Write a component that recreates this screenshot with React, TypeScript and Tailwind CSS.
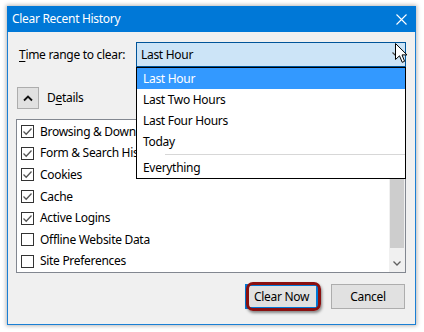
import React from "react";

const font = { fontFamily: '"Noto Sans", "Open Sans", sans-serif', letterSpacing: "-0.3px" };

function Check({ checked }: { checked: boolean }) {
  return (
    <span className="w-[13px] h-[13px] border border-[#333333] bg-white flex items-center justify-center shrink-0">
      {checked && (
        <svg width="11" height="11" viewBox="0 0 11 11">
          <path d="M1.5 5.5 L4.2 8.2 L9.5 2.5" fill="none" stroke="#555555" strokeWidth="1.3" />
        </svg>
      )}
    </span>
  );
}

const items: [string, boolean][] = [
  ["Browsing & Download History", true],
  ["Form & Search History", true],
  ["Cookies", true],
  ["Cache", true],
  ["Active Logins", true],
  ["Offline Website Data", false],
  ["Site Preferences", false],
];

export default function App() {
  return (
    <div className="w-[424px] h-[332px] bg-white pl-[7px] pt-[6px] text-[12px] text-black" style={font}>
      <div className="w-[409px] h-[319px] flex flex-col shadow-[0_0_4px_1px_rgba(0,0,0,0.28)]">
        <div className="h-[26px] bg-[#0078d7] flex items-center justify-between pl-[5px] pr-[9px] text-white text-[12px]">
          <span>Clear Recent History</span>
          <svg width="11" height="11" viewBox="0 0 11 11">
            <path d="M0.5 0.5 L10.5 10.5 M10.5 0.5 L0.5 10.5" stroke="white" strokeWidth="1.1" />
          </svg>
        </div>
        <div className="flex-1 bg-[#f0f0f0] border-x border-b border-[#1a7fd4] pl-[8px] pr-[9px] pt-[10px] relative">
          {/* time range row */}
          <div className="flex items-center h-[25px]">
            <div className="w-[120px] pl-[3px]">
              <span className="underline underline-offset-2">T</span>ime range to clear:
            </div>
            <div className="flex-1 h-[25px] bg-[#cce4f7] border border-[#005499] flex items-center justify-between pl-[4px] pr-[4px] relative">
              <span>Last Hour</span>
              <svg width="9" height="6" viewBox="0 0 9 6">
                <path d="M0.5 0.5 L4.5 4.5 L8.5 0.5" fill="none" stroke="#404040" strokeWidth="1.2" />
              </svg>
            </div>
          </div>

          {/* details row */}
          <div className="flex items-center mt-[20px] ml-[1px] gap-[8px]">
            <div className="w-[22px] h-[22px] bg-[#e1e1e1] border border-[#adadad] flex items-center justify-center">
              <svg width="10" height="7" viewBox="0 0 10 7">
                <path d="M1 5.5 L5 1.5 L9 5.5" fill="none" stroke="#111111" strokeWidth="1.8" />
              </svg>
            </div>
            <span>
              D<span className="underline underline-offset-2">e</span>tails
            </span>
          </div>

          {/* list */}
          <div className="mt-[10px] h-[154px] w-[390px] bg-white border border-[#828790] flex">
            <div className="flex-1 flex flex-col pt-[1px]">
              {items.map(([label, c]) => (
                <div key={label} className="h-[22px] flex items-center pl-[4px] gap-[6px] whitespace-nowrap">
                  <Check checked={c} />
                  <span>{label}</span>
                </div>
              ))}
            </div>
            <div className="w-[16px] bg-[#f0f0f0] flex flex-col">
              <div className="h-[17px]" />
              <div className="h-[111px] mx-[1px] bg-[#cdcdcd]" />
              <div className="flex-1" />
              <div className="h-[17px] flex items-center justify-center">
                <svg width="8" height="5" viewBox="0 0 8 5">
                  <path d="M0.5 0.5 L4 4 L7.5 0.5" fill="none" stroke="#606060" strokeWidth="1.3" />
                </svg>
              </div>
            </div>
          </div>

          {/* buttons */}
          <div className="flex justify-end gap-[13px] mt-[11px] pr-[1px]">
            <div className="relative">
              <div className="w-[73px] h-[25px] bg-[#e1e1e1] border-2 border-[#0078d7] flex items-center justify-center">
                Clear Now
              </div>
              <div className="absolute left-[1px] top-[-2px] right-[-3px] bottom-[-2px] border-[3px] border-[#8a1010] rounded-[7px] shadow-[1px_2px_3px_rgba(0,0,0,0.45)]" />
            </div>
            <div className="w-[74px] h-[25px] bg-[#e1e1e1] border border-[#adadad] flex items-center justify-center">
              Cancel
            </div>
          </div>

          {/* dropdown popup */}
          <div className="absolute left-[128px] top-[35px] w-[270px] h-[112px] bg-white border border-black flex flex-col">
            <div className="h-[21px] bg-[#3399ff] text-white flex items-center pl-[6px]">Last Hour</div>
            <div className="h-[21px] flex items-center pl-[6px]">Last Two Hours</div>
            <div className="h-[21px] flex items-center pl-[6px]">Last Four Hours</div>
            <div className="h-[21px] flex items-center pl-[6px]">Today</div>
            <div className="h-[5px] flex items-center pl-[28px]">
              <div className="h-px w-full bg-[#d7d7d7]" />
            </div>
            <div className="h-[21px] flex items-center pl-[6px]">Everything</div>
          </div>

          {/* mouse cursor */}
          <svg className="absolute left-[387px] top-[11px]" width="13" height="21" viewBox="0 0 13 21">
            <path d="M0.5 0.5 L0.5 16.5 L4.5 12.8 L7.2 19.3 L9.6 18.3 L7 11.9 L12 11.9 Z" fill="white" stroke="black" strokeWidth="1" strokeLinejoin="miter" />
          </svg>
        </div>
      </div>
    </div>
  );
}
